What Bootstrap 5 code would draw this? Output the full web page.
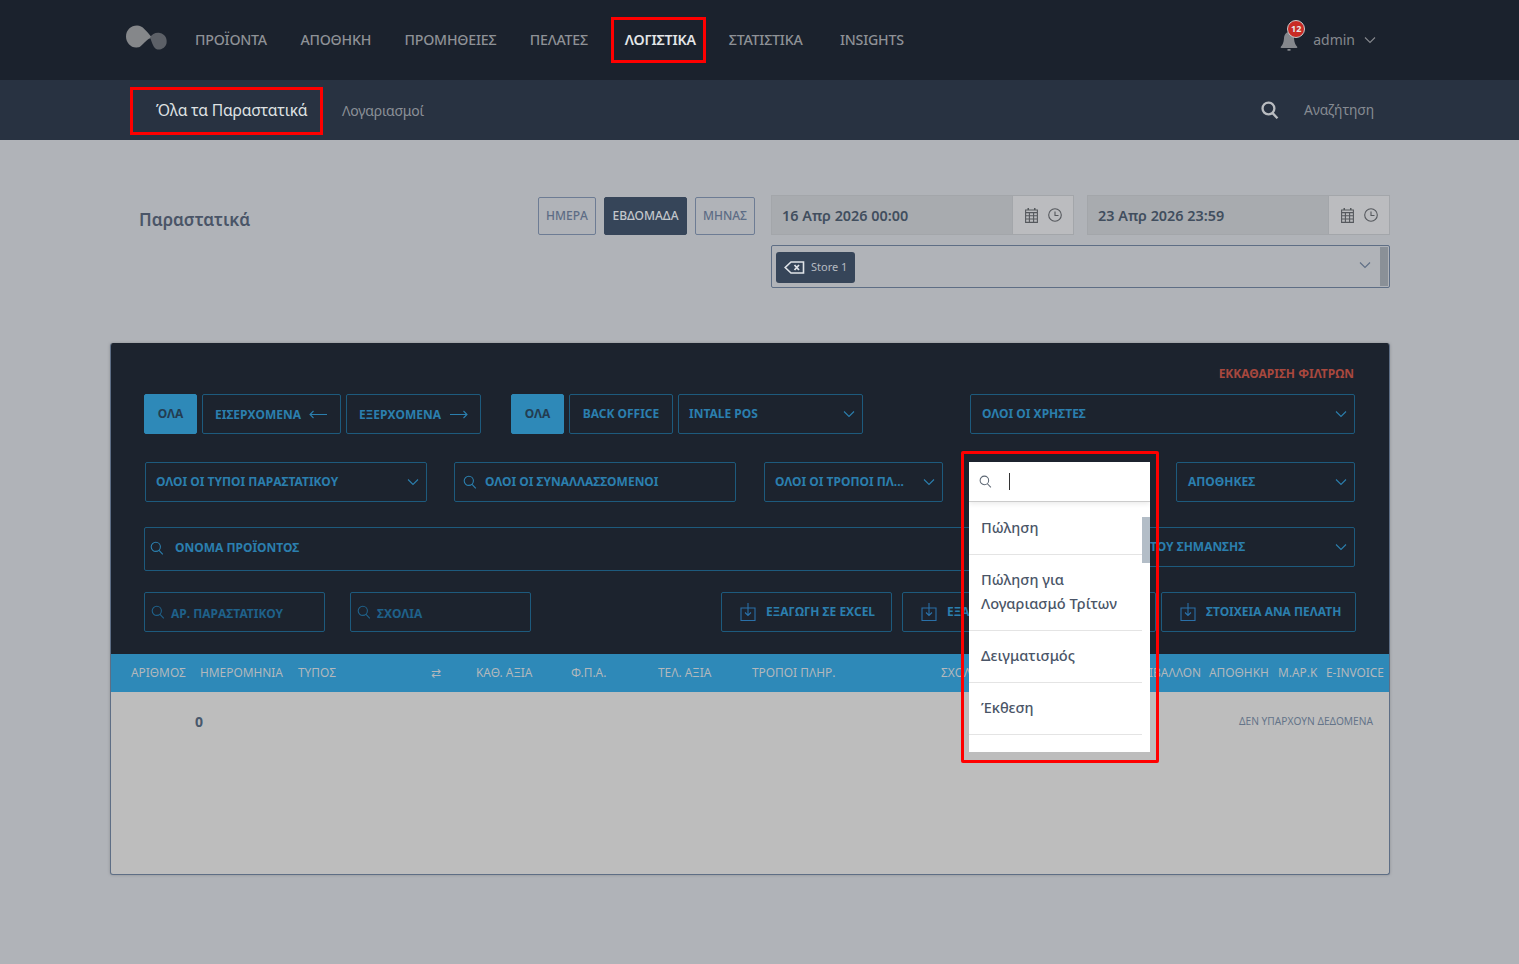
<!DOCTYPE html>
<html lang="el">
  <head>
    <meta charset="UTF-8" />
    <meta name="viewport" content="width=device-width, initial-scale=1" />
    <title>Παραστατικά</title>
    <link href="https://cdn.jsdelivr.net/npm/bootstrap@5.3.3/dist/css/bootstrap.min.css" rel="stylesheet" />
    <style>
      body { background: #b0b3b8; font-family: "Noto Sans", "Open Sans", sans-serif; height: 964px; overflow: hidden; position: relative; }
      svg.ico { fill: none; stroke: currentColor; stroke-width: 1.1; flex: none; }

      .top-bar { height: 80px; background: #1b222d; padding: 0 143px 0 126px; }
      .top-link { color: #8e9196; font-size: 14.2px; letter-spacing: -.22px; font-weight: 500; text-decoration: none; margin-top: -1px; }
      .top-links { gap: 33.5px; margin-left: 26px; }
      .top-link.on { color: #e4e6e8; font-weight: 600; border: 3px solid #f00; height: 46px; width: 95px; margin: 0 -10.5px 0 -10.5px; padding-left: 11px; display: flex; align-items: center; }
      .bell-wrap { position: relative; width: 18px; height: 19px; color: #85888d; margin-top: 3px; }
      .bell-count { position: absolute; top: -12px; left: 7px; width: 18px; height: 18px; border-radius: 50%; background: #c92a25; border: 1px solid #c9cacc; color: #e8e8e8; font-size: 9px; font-weight: 700; display: flex; align-items: center; justify-content: center; }
      .user-name { color: #85888d; font-size: 14px; margin: -2px 0 0 15px; }
      .user-chev { color: #85888d; margin-left: 9px; }

      .sub-bar { height: 60px; background: #283241; padding: 0 145px 0 130px; }
      .sub-on { color: #dfe1e3; font-size: 15.7px; letter-spacing: -.2px; border: 3px solid #f00; width: 193px; height: 48px; padding-left: 23px; margin-top: 2px; display: flex; align-items: center; }
      .sub-link { color: #8b9097; font-size: 14px; letter-spacing: -.2px; margin-left: 19px; }
      .sub-search { color: #b9bcc0; margin-top: -1px; }
      .sub-search span { color: #868b92; font-size: 13.8px; letter-spacing: -.1px; margin-left: 25px; padding-top: 2px; }
      .sub-search svg { stroke-width: 1.8; }

      .head-area { height: 203px; padding: 55px 129px 0 139px; }
      .page-title { font-size: 17px; font-weight: 600; color: #4a5567; margin: 15px 0 0; }
      .range-btn { height: 38px; margin-top: 2px; font-size: 12px; font-weight: 500; padding: 0; color: #5d6c85; border: 1px solid #6d7c94; border-radius: 2px; background: transparent; display: flex; align-items: center; justify-content: center; }
      .range-btn.on { background: #364559; border-color: #364559; color: #c3c7cc; }
      .range-day { width: 58px; } .range-week { width: 83px; } .range-month { width: 60px; }
      .date-row { width: 619px; }
      .date-box { width: 303px; height: 40px; border: 1px solid #a3a6aa; background: #a8abaf; }
      .date-val { color: #414e5e; font-size: 14.4px; font-weight: 600; padding: 2px 0 0 10px; }
      .date-add { width: 61px; background: #bbbcbf; color: #55585d; border-left: 1px solid #a3a6aa; gap: 10px; }
      .store-box { width: 619px; height: 43px; border: 1px solid #5e6e85; border-radius: 2px; margin-top: 10px; padding: 0 1px 0 4px; }
      .store-tag { width: 79px; height: 31px; background: #364559; color: #b7bbc1; border-radius: 3px; font-size: 11px; gap: 6px; padding-left: 8px; margin-top: 1px; }
      .store-tag span { padding-top: 1px; }
      .store-chev { color: #5e6e85; margin-right: 9px; margin-top: -3px; }
      .store-thumb { width: 8px; height: 39px; background: #8a9097; }

      .panel-card { width: 1280px; height: 532px; margin-left: 110px; background: #bdbdbd; border: 1px solid #5e6e85; border-top: 0; border-radius: 3px; overflow: hidden; box-shadow: 0 0 3px #8a8d92; position: relative; }
      .filter-area { height: 311px; background: #1c232e; padding: 21px 34px 0 33px; }
      .clear-link { color: #a8483e; font-size: 12px; font-weight: 700; text-align: right; height: 30px; line-height: 20px; padding-right: 1px; }
      .f-row { display: flex; align-items: flex-start; }
      .f-btn { height: 40px; border: 1px solid #1d5a7d; border-radius: 2px; color: #2b7fae; font-size: 12px; font-weight: 700; display: flex; align-items: center; background: transparent; padding: 0 7px 0 11px; white-space: nowrap; overflow: hidden; }
      .f-btn.on { background: #2e89b8; border-color: #2e89b8; color: #233d52; justify-content: center; padding: 0; }
      .f-btn.btw { justify-content: space-between; }
      .f-btn.mid { justify-content: center; padding: 0; }
      .f-dim { color: #1f618a; }
      .f-dim span { padding-top: 3px; }
      .low-text { padding-top: 1px; }
      .tall-input { height: 44px; padding-bottom: 3px; }
      .row-two { margin-top: 28px; }
      .row-three { margin-top: 25px; height: 44px; }
      .row-four { margin-top: 21px; }
      .down-ico { color: #2a70a8; }

      .tbl-head { display: grid; grid-template-columns: 69px 98px 133px 45px 95px 87px 94px 189px 159px 109px 69px 48px 64px; height: 38px; background: #2e89b8; color: #b3b8bc; font-size: 11.9px; align-items: center; padding-left: 20px; white-space: nowrap; }
      .tbl-body { position: relative; height: 183px; }
      .zero-val { position: absolute; left: 84px; top: 19px; color: #48586c; font-size: 14px; font-weight: 700; }
      .no-data { position: absolute; right: 16px; top: 22px; color: #647489; font-size: 10.2px; }

      .select-drop { position: absolute; left: 969px; top: 462px; width: 181px; height: 290px; background: #fff; overflow: hidden; }
      .drop-search { height: 40px; border-bottom: 1px solid #ccc; box-shadow: 0 2px 5px rgba(0,0,0,.08); padding-left: 10px; color: #5c6673; }
      .drop-caret { width: 1px; height: 17px; background: #333; margin-left: 17px; }
      .drop-list { margin: 1px 0 0; padding: 0; list-style: none; }
      .drop-list li { width: 173px; padding: 12px 12px 15px; border-bottom: 1px solid #e4e4e4; color: #4a5567; font-size: 14.6px; font-weight: 500; line-height: 24px; }
      .drop-thumb { position: absolute; left: 173px; top: 55px; width: 8px; height: 46px; background: #b3bdc7; }
      .red-frame { position: absolute; left: 961px; top: 451px; width: 198px; height: 312px; border: 3px solid #f00; border-radius: 2px; pointer-events: none; }
    </style>
  </head>
  <body>
    <svg width="0" height="0" class="position-absolute">
      <symbol id="i-chev" viewBox="0 0 12 8"><path d="M1 1.500l5 5 5-5" /></symbol>
      <symbol id="i-search" viewBox="0 0 14 14"><circle cx="5.800" cy="5.800" r="4.600" /><path d="M9 9.400l3.800 4" /></symbol>
      <symbol id="i-down" viewBox="0 0 16 18"><path d="M1 5h14v12.500H1zM8 0v12M5 9.500l3 3 3-3" /></symbol>
      <symbol id="i-cal" viewBox="0 0 13 15"><path fill="currentColor" stroke="none" d="M2.500 0H4v2H2.500zM9 0h1.500v2H9z" /><path stroke-width="1.100" d="M.6 2h11.800v12.400H.6zM.6 4.600h11.800M.6 7.800h11.800M.6 11h11.800M4.400 4.600v9.800M8.600 4.600v9.800" /></symbol>
      <symbol id="i-clock" viewBox="0 0 14 14"><circle cx="7" cy="7" r="6.300" /><path d="M7 3.500V7.500h3.500" /></symbol>
    </svg>

    <!-- Header -->
    <nav class="top-bar d-flex align-items-center">
      <svg width="43" height="25" viewBox="0 0 43 25" class="flex-none" style="margin-top:-5px">
        <path d="M26.500 13.500C22 13 19 18 14 22.300 12.500 23 11.500 23 10 23 4.500 23 0 18 0 12 0 5.500 5 1 11 1c6 0 9 5.500 15.500 12.500z" fill="#85878a" transform="translate(0 -.5)" />
        <path d="M24 12.500c2-3.500 6-5.500 10-4.500 5 1.200 7.500 5.500 6.500 10.500-1 4-5 6.500-9 6-4-.5-5.500-7.500-7.500-12z" fill="#5c6067" />
      </svg>
      <div class="d-flex align-items-center top-links">
        <a class="top-link" href="#">ΠΡΟΪΟΝΤΑ</a>
        <a class="top-link" href="#">ΑΠΟΘΗΚΗ</a>
        <a class="top-link" href="#">ΠΡΟΜΗΘΕΙΕΣ</a>
        <a class="top-link" href="#">ΠΕΛΑΤΕΣ</a>
        <a class="top-link on" href="#">ΛΟΓΙΣΤΙΚΑ</a>
        <a class="top-link" href="#">ΣΤΑΤΙΣΤΙΚΑ</a>
        <a class="top-link ms-1" href="#">INSIGHTS</a>
      </div>
      <div class="ms-auto d-flex align-items-center">
        <div class="bell-wrap">
          <svg width="18" height="19" viewBox="0 0 18 19" class="d-block"><path fill="currentColor" d="M9 0C5.800 0 4.200 3 4 6.500 3.700 10.500 2.500 13 1 14.500c-.5.600-.6 1.500.5 1.500h15c1.100 0 1-.9.500-1.500-1.500-1.500-2.700-4-3-8C13.800 3 12.200 0 9 0zM7.500 17h3v1.700h-3z" /></svg>
          <span class="bell-count">12</span>
        </div>
        <span class="user-name">admin</span>
        <svg class="ico user-chev" width="12" height="8"><use href="#i-chev" /></svg>
      </div>
    </nav>

    <div class="sub-bar d-flex align-items-center">
      <span class="sub-on">Όλα τα Παραστατικά</span>
      <span class="sub-link">Λογαριασμοί</span>
      <div class="sub-search ms-auto d-flex align-items-center">
        <svg class="ico" width="18" height="18"><use href="#i-search" /></svg>
        <span>Αναζήτηση</span>
      </div>
    </div>

    <!-- Page head -->
    <div class="head-area d-flex">
      <h1 class="page-title">Παραστατικά</h1>
      <div class="ms-auto d-flex gap-2 range-group">
        <button class="range-btn range-day">ΗΜΕΡΑ</button>
        <button class="range-btn range-week on">ΕΒΔΟΜΑΔΑ</button>
        <button class="range-btn range-month">ΜΗΝΑΣ</button>
      </div>
      <div class="ms-3">
        <div class="date-row d-flex justify-content-between">
          <div class="date-box d-flex align-items-center">
            <span class="date-val flex-grow-1">16 Απρ 2026 00:00</span>
            <div class="date-add h-100 d-flex align-items-center justify-content-center">
              <svg class="ico" width="13" height="15"><use href="#i-cal" /></svg>
              <svg class="ico" width="14" height="14"><use href="#i-clock" /></svg>
            </div>
          </div>
          <div class="date-box d-flex align-items-center">
            <span class="date-val flex-grow-1">23 Απρ 2026 23:59</span>
            <div class="date-add h-100 d-flex align-items-center justify-content-center">
              <svg class="ico" width="13" height="15"><use href="#i-cal" /></svg>
              <svg class="ico" width="14" height="14"><use href="#i-clock" /></svg>
            </div>
          </div>
        </div>
        <div class="store-box d-flex align-items-center">
          <div class="store-tag d-flex align-items-center">
            <svg width="21" height="13" viewBox="0 0 21 13" class="flex-none"><path fill="none" stroke="#dfe3e8" stroke-width="1.600" d="M7 1h12.500v11H7L1.200 6.500z" /><path fill="none" stroke="#dfe3e8" stroke-width="1.800" d="M10.500 4l4.500 5M15 4l-4.500 5" /></svg>
            <span>Store 1</span>
          </div>
          <svg class="ico store-chev ms-auto" width="12" height="8"><use href="#i-chev" /></svg>
          <div class="store-thumb"></div>
        </div>
      </div>
    </div>

    <!-- Filters and table -->
    <div class="panel-card">
      <div class="filter-area">
        <div class="clear-link">ΕΚΚΑΘΑΡΙΣΗ ΦΙΛΤΡΩΝ</div>
        <div class="f-row">
          <div class="f-btn on low-text" style="width:53px">ΟΛΑ</div>
          <div class="f-btn low-text" style="width:139px;margin-left:5px;padding-left:12px">ΕΙΣΕΡΧΟΜΕΝΑ
            <svg class="ico ms-2" width="19" height="9" viewBox="0 0 19 9"><path d="M18 4.500H1M4.500 1L1 4.500 4.500 8" /></svg>
          </div>
          <div class="f-btn low-text" style="width:135px;margin-left:5px;padding-left:12px">ΕΞΕΡΧΟΜΕΝΑ
            <svg class="ico ms-2" width="19" height="9" viewBox="0 0 19 9"><path d="M1 4.500h17M14.500 1L18 4.500 14.500 8" /></svg>
          </div>
          <div class="f-btn on low-text" style="width:53px;margin-left:30px">ΟΛΑ</div>
          <div class="f-btn mid low-text" style="width:104px;margin-left:5px">BACK OFFICE</div>
          <div class="f-btn btw" style="width:185px;margin-left:5px;padding-left:10px">INTALE POS
            <svg class="ico" width="12" height="8"><use href="#i-chev" /></svg>
          </div>
          <div class="f-btn btw ms-auto" style="width:385px">ΟΛΟΙ ΟΙ ΧΡΗΣΤΕΣ
            <svg class="ico" width="12" height="8"><use href="#i-chev" /></svg>
          </div>
        </div>
        <div class="f-row row-two">
          <div class="f-btn btw" style="width:282px;margin-left:1px;padding-left:10px">ΟΛΟΙ ΟΙ ΤΥΠΟΙ ΠΑΡΑΣΤΑΤΙΚΟΥ
            <svg class="ico" width="12" height="8"><use href="#i-chev" /></svg>
          </div>
          <div class="f-btn" style="width:282px;margin-left:27px;padding-left:8px">
            <svg class="ico me-2" width="14" height="14"><use href="#i-search" /></svg>ΟΛΟΙ ΟΙ ΣΥΝΑΛΛΑΣΣΟΜΕΝΟΙ
          </div>
          <div class="f-btn btw" style="width:179px;margin-left:28px;padding-left:10px">ΟΛΟΙ ΟΙ ΤΡΟΠΟΙ ΠΛ...
            <svg class="ico" width="12" height="8"><use href="#i-chev" /></svg>
          </div>
          <div class="f-btn btw ms-auto" style="width:179px">ΑΠΟΘΗΚΕΣ
            <svg class="ico" width="12" height="8"><use href="#i-chev" /></svg>
          </div>
        </div>
        <div class="f-row row-three">
          <div class="f-btn tall-input" style="width:880px;padding-left:5px">
            <svg class="ico" width="14" height="14"><use href="#i-search" /></svg><span style="margin-left:11px">ΟΝΟΜΑ ΠΡΟΪΟΝΤΟΣ</span>
          </div>
          <div class="f-btn btw ms-auto" style="width:325px;padding-left:119px">ΤΟΥ ΣΗΜΑΝΣΗΣ
            <svg class="ico" width="12" height="8"><use href="#i-chev" /></svg>
          </div>
        </div>
        <div class="f-row row-four">
          <div class="f-btn f-dim" style="width:181px;padding-left:6px">
            <svg class="ico" width="14" height="14"><use href="#i-search" /></svg><span style="margin-left:6px">ΑΡ. ΠΑΡΑΣΤΑΤΙΚΟΥ</span>
          </div>
          <div class="f-btn f-dim" style="width:181px;margin-left:25px;padding-left:6px">
            <svg class="ico" width="14" height="14"><use href="#i-search" /></svg><span style="margin-left:6px">ΣΧΟΛΙΑ</span>
          </div>
          <div class="f-btn ms-auto" style="width:171px;padding-left:18px">
            <svg class="ico down-ico" width="16" height="18"><use href="#i-down" /></svg><span style="margin-left:10px">ΕΞΑΓΩΓΗ ΣΕ EXCEL</span>
          </div>
          <div class="f-btn" style="width:254px;margin-left:10px;padding-left:18px">
            <svg class="ico down-ico" width="16" height="18"><use href="#i-down" /></svg><span style="margin-left:10px">ΕΞΑ</span>
          </div>
          <div class="f-btn" style="width:195px;margin-left:5px;margin-right:-1px;padding-left:18px">
            <svg class="ico down-ico" width="16" height="18"><use href="#i-down" /></svg><span style="margin-left:10px">ΣΤΟΙΧΕΙΑ ΑΝΑ ΠΕΛΑΤΗ</span>
          </div>
        </div>
      </div>

      <div class="tbl-head">
        <span>ΑΡΙΘΜΟΣ</span><span>ΗΜΕΡΟΜΗΝΙΑ</span><span>ΤΥΠΟΣ</span><span>⇄</span><span>ΚΑΘ. ΑΞΙΑ</span><span>Φ.Π.Α.</span><span>ΤΕΛ. ΑΞΙΑ</span><span>ΤΡΟΠΟΙ ΠΛΗΡ.</span><span>ΣΧΟΛΙΑ</span><span class="text-end pe-2">ΠΕΡΙΒΑΛΛΟΝ</span><span>ΑΠΟΘΗΚΗ</span><span>Μ.ΑΡ.Κ</span><span>E-INVOICE</span>
      </div>
      <div class="tbl-body">
        <span class="zero-val">0</span>
        <span class="no-data">ΔΕΝ ΥΠΑΡΧΟΥΝ ΔΕΔΟΜΕΝΑ</span>
      </div>
    </div>

    <!-- Open select over the filters -->
    <div class="select-drop">
      <div class="drop-search d-flex align-items-center">
        <svg class="ico" width="13" height="13" viewBox="0 0 14 14"><use href="#i-search" /></svg>
        <span class="drop-caret"></span>
      </div>
      <ul class="drop-list">
        <li>Πώληση</li>
        <li>Πώληση για Λογαριασμό Τρίτων</li>
        <li>Δειγματισμός</li>
        <li>Έκθεση</li>
      </ul>
      <div class="drop-thumb"></div>
    </div>
    <div class="red-frame"></div>

    <script src="https://cdn.jsdelivr.net/npm/bootstrap@5.3.3/dist/js/bootstrap.bundle.min.js"></script>
  </body>
</html>
